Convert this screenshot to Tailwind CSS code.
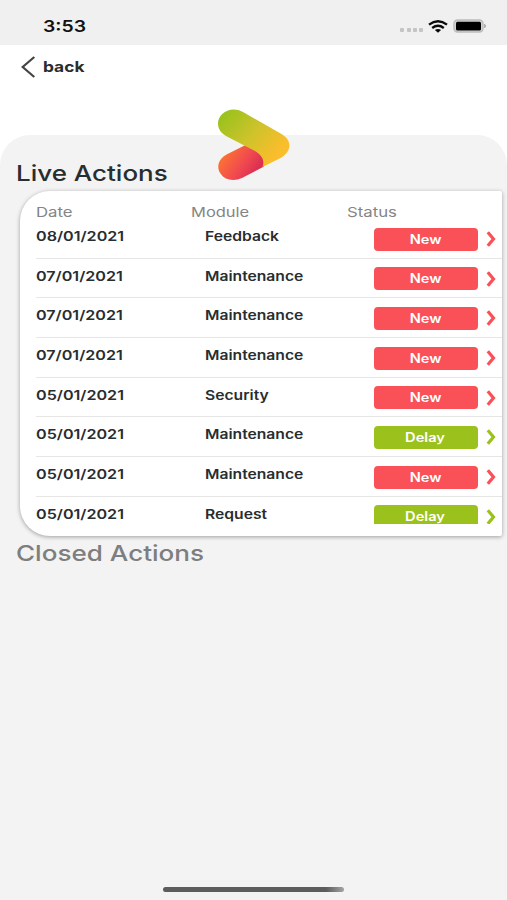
<!DOCTYPE html>
<html lang="en">
<head>
<meta charset="utf-8">
<title>Actions</title>
<script src="https://cdn.jsdelivr.net/npm/@tailwindcss/browser@4"></script>
</head>
<body class="w-[507px] h-[900px] overflow-hidden bg-white font-['Inter','Liberation_Sans',sans-serif] text-[#282d30] flex flex-col">
  <header class="h-[44.5px] shrink-0 bg-[#f0f0f0] flex items-start justify-between pl-[42.5px] pr-[20px]">
    <span class="mt-[16px] text-[16px] leading-[20px] font-semibold text-[#111] origin-left scale-x-[1.21]">3:53</span>
    <div class="flex items-center mt-[18px] h-[16px]">
      <div class="flex gap-[2.2px] mt-[7px] mr-[5px]">
        <i class="size-[4px] rounded-[1px] bg-[#c4c4c4]"></i><i class="size-[4px] rounded-[1px] bg-[#c4c4c4]"></i><i class="size-[4px] rounded-[1px] bg-[#c4c4c4]"></i><i class="size-[4px] rounded-[1px] bg-[#c4c4c4]"></i>
      </div>
      <svg class="w-[20px] h-[13px] mr-[5px]" viewBox="0 0 20 13" fill="none" stroke="#0a0a0a" stroke-width="2.3"><path d="M1 4.7Q10-2.2 19 4.7M4.2 8Q10 3.6 15.8 8"/><path d="M6.9 10.1Q10 7.8 13.1 10.1L10 12.8Z" fill="#0a0a0a" stroke="none"/></svg>
      <svg class="w-[34px] h-[14px]" viewBox="0 0 34 14"><rect x="1" y="1" width="29" height="12" rx="3.5" fill="#d4d4d4" stroke="#bcbcbc" stroke-width="1.4"/><rect x="3" y="2.7" width="25" height="8.8" rx="1.5" fill="#000"/><path d="M31.5 5Q34 7 31.5 9Z" fill="#a5a5a5" stroke="#a5a5a5" stroke-width=".6"/></svg>
    </div>
  </header>
  <nav class="relative h-[90.5px] shrink-0 flex items-start pl-[21px]">
    <svg class="w-[15px] h-[22px] mt-[11.5px]" viewBox="0 0 15 22" fill="none" stroke="#454545" stroke-width="2.2"><path d="M13.3 1L1.7 11L13.3 21"/></svg>
    <span class="ml-[6.5px] mt-[12px] text-[14px] leading-[20px] font-bold origin-left scale-x-[1.24]">back</span>
    <svg class="absolute left-[216px] top-[63.5px] w-[76px] h-[74px]" viewBox="216 108 76 74">
      <defs>
        <linearGradient id="g" gradientUnits="userSpaceOnUse" x1="222" y1="114" x2="272" y2="158"><stop offset="0" stop-color="#98c21d"/><stop offset=".55" stop-color="#cfc32b"/><stop offset="1" stop-color="#fabd2b"/></linearGradient>
        <linearGradient id="r" gradientUnits="userSpaceOnUse" x1="224" y1="156" x2="252" y2="176"><stop offset="0" stop-color="#fb7035"/><stop offset=".6" stop-color="#f04850"/><stop offset="1" stop-color="#dc3052"/></linearGradient>
      </defs>
      <path d="M244.5 145.5L226.5 154.5C218.5 159 216 167 220.500 173.500C225 180.500 234 181.500 242 178L264 166.500C266 155 256 145 244.500 145.500Z" fill="url(#r)"/>
      <path d="M233.500 109.500C225 109.500 218 116 218 123.500C218 129 221 133 226 136L251 149C262 154 265 160 262.500 167L281.500 157.500C292 151 292 140 281.500 134L243 112C240 110.300 237 109.500 233.500 109.500Z" fill="url(#g)"/>
    </svg>
  </nav>
  <main class="flex-1 bg-[#f3f3f3] rounded-t-[30px] flex flex-col items-start">
    <h1 class="ml-[15.5px] mt-[24px] h-[31.500px] text-[22px] leading-[28px] font-medium origin-left scale-x-[1.18] whitespace-nowrap">Live Actions</h1>
    <section class="ml-[20px] w-[482px] h-[345px] bg-white rounded-l-[30px] rounded-r-[2px] shadow-[0_1px_4px_rgba(0,0,0,0.35)]">
      <div class="grid grid-cols-[155px_156px_1fr] h-[28.500px] pl-[15.500px] pt-[12px] text-[13.5px] leading-[18px] text-[#858585]">
        <span class="justify-self-start origin-left scale-x-[1.24]">Date</span><span class="justify-self-start origin-left scale-x-[1.22]">Module</span><span class="justify-self-start origin-left scale-x-[1.24]">Status</span>
      </div>
      <div id="rows" class="h-[304.500px] ml-[16px] overflow-hidden"></div>
    </section>
    <h2 class="ml-[15.5px] mt-[3.500px] text-[22px] leading-[28px] font-medium text-[#7e7e7e] origin-left scale-x-[1.185] whitespace-nowrap">Closed Actions</h2>
    <div class="mt-auto mb-[8px] ml-[163px] w-[181px] h-[5px] rounded-full bg-linear-to-r from-[#5c5c5c] from-90% to-[#a5a5a5]"></div>
  </main>
  <script>
    const actions = [
      ['08/01/2021', 'Feedback', 'New'], ['07/01/2021', 'Maintenance', 'New'],
      ['07/01/2021', 'Maintenance', 'New'], ['07/01/2021', 'Maintenance', 'New'],
      ['05/01/2021', 'Security', 'New'], ['05/01/2021', 'Maintenance', 'Delay'],
      ['05/01/2021', 'Maintenance', 'New'], ['05/01/2021', 'Request', 'Delay']
    ];
    const tone = { New: 'bg-[#fa5058]', Delay: 'bg-[#9bc21c]' };
    const arrow = { New: '#fa5058', Delay: '#9bc21c' };
    document.getElementById('rows').innerHTML = actions.map(([date, module, status]) => `
      <div class="h-[39.700px] flex items-start border-b border-[#e6e6e6] text-[13px] leading-[18px] font-semibold">
        <div class="w-[168.500px] pt-[8px]"><span class="inline-block -ml-[0.5px] origin-left scale-x-[1.24]">${date}</span></div>
        <div class="w-[169px] pt-[8px]"><span class="inline-block origin-left scale-x-[1.205]">${module}</span></div>
        <div class="w-[104px] h-[23px] mt-[8.600px] rounded-[4px] flex items-center justify-center ${tone[status]}"><span class="text-[12.5px] text-white pt-px scale-x-[1.17]">${status}</span></div>
        <svg class="w-[10px] h-[16px] ml-[8.500px] mt-[12px]" viewBox="0 0 10 16" fill="none" stroke="${arrow[status]}" stroke-width="3.2"><path d="M1.800 1.200L7.500 8L1.800 14.800"/></svg>
      </div>`).join('');
  </script>
</body>
</html>
